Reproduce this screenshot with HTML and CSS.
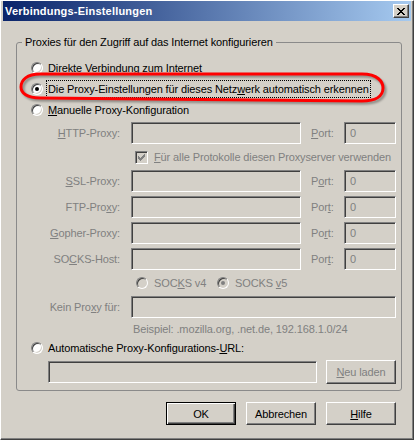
FILE: index.html
```html
<!DOCTYPE html>
<html lang="de">
<head>
<meta charset="utf-8">
<title>Verbindungs-Einstellungen</title>
<link rel="stylesheet" href="styles.css">
</head>
<body>
<div class="window">
  <div class="titlebar">
    <span class="title">Verbindungs-Einstellungen</span>
    <span class="close"><svg width="8" height="7" viewBox="0 0 8 7" shape-rendering="crispEdges"><path fill="#000" d="M0 0h2v1H0zM6 0h2v1H6zM1 1h2v1H1zM5 1h2v1H5zM2 2h4v1H2zM3 3h2v1H3zM2 4h4v1H2zM1 5h2v1H1zM5 5h2v1H5zM0 6h2v1H0zM6 6h2v1H6z"/></svg></span>
  </div>

  <fieldset class="group">
    <legend>Proxies für den Zugriff auf das Internet konfigurieren</legend>

    <div class="radio-row"><span class="radio"></span><span class="lbl"><u>D</u>irekte Verbindung zum Internet</span></div>
    <div class="radio-row"><span class="radio checked"></span><span class="lbl focus">Die Proxy-Einstellungen für dieses Netz<u>w</u>erk automatisch erkennen</span></div>
    <div class="radio-row"><span class="radio"></span><span class="lbl"><u>M</u>anuelle Proxy-Konfiguration</span></div>

    <div class="manual">
      <span class="flabel"><u>H</u>TTP-Proxy:</span><span class="field"></span><span class="plabel"><u>P</u>ort:</span><span class="field">0</span>

      <div class="check-row span-all">
        <span class="check"><svg width="7" height="7" viewBox="0 0 7 7" shape-rendering="crispEdges"><path fill="#808080" d="M6 0h1v1H6zM5 1h2v1H5zM0 2h1v1H0zM4 2h3v1H4zM0 3h2v1H0zM3 3h3v1H3zM0 4h5v1H0zM1 5h3v1H1zM2 6h1v1H2z"/></svg></span>
        <span><u>F</u>ür alle Protokolle diesen Proxyserver verwenden</span>
      </div>

      <span class="flabel"><u>S</u>SL-Proxy:</span><span class="field"></span><span class="plabel">P<u>o</u>rt:</span><span class="field">0</span>
      <span class="flabel">FTP-Pro<u>x</u>y:</span><span class="field"></span><span class="plabel">Por<u>t</u>:</span><span class="field">0</span>
      <span class="flabel"><u>G</u>opher-Proxy:</span><span class="field"></span><span class="plabel">Po<u>r</u>t:</span><span class="field">0</span>
      <span class="flabel">SO<u>C</u>KS-Host:</span><span class="field"></span><span class="plabel">Por<u>t</u>:</span><span class="field">0</span>

      <div class="socks-row span-all">
        <span class="socks-opt"><span class="radio disabled"></span><span>SOC<u>K</u>S v4</span></span>
        <span class="socks-opt"><span class="radio disabled checked"></span><span>SOCKS <u>v</u>5</span></span>
      </div>

      <span class="flabel">Kein Pro<u>x</u>y für:</span><span class="field span-all"></span>
      <div class="example span-all">Beispiel: .mozilla.org, .net.de, 192.168.1.0/24</div>
    </div>

    <div class="radio-row auto"><span class="radio"></span><span class="lbl">Automatische Proxy-Konfigurations-<u>U</u>RL:</span></div>
    <div class="url-row">
      <span class="field url"></span>
      <span class="btn disabled"><span><u>N</u>eu laden</span></span>
    </div>
  </fieldset>

  <div class="buttons">
    <span class="btn default">OK</span>
    <span class="btn">Abbrechen</span>
    <span class="btn"><span><u>H</u>ilfe</span></span>
  </div>

  <svg class="annotation" width="414" height="440" viewBox="0 0 414 440">
    <defs>
      <filter id="sh" x="-10%" y="-50%" width="120%" height="200%">
        <feGaussianBlur stdDeviation="1.2"/>
      </filter>
    </defs>
    <path d="M41 76 L363 76 C379 76 385 84 385 90 C385 98 378 103 364 103 L41 100 C29 100 23 95 23 89 C23 82 29 76 41 76 Z" fill="none" stroke="rgba(0,0,0,0.35)" stroke-width="3" filter="url(#sh)"/>
    <path d="M40 74 L362 74 C378 74 383 82 383 88 C383 96 376 101 362 101 L40 98 C27 98 21 93 21 87 C21 80 27 74 40 74 Z" fill="none" stroke="#ff0000" stroke-width="3"/>
  </svg>
</div>
</body>
</html>
```

FILE: styles.css
```css
html, body {
  margin: 0;
  padding: 0;
  background: #d4d0c8;
}

body {
  font-family: "Liberation Sans", Arial, sans-serif;
  font-size: 11px;
  letter-spacing: -0.12px;
  color: #000;
}

u {
  text-decoration: underline;
  text-underline-offset: 1px;
}

.window {
  position: relative;
  box-sizing: border-box;
  width: 414px;
  height: 440px;
  background: #d4d0c8;
  border-style: solid;
  border-width: 1px;
  border-color: #ffffff #404040 #404040 #ffffff;
  box-shadow: inset -1px -1px #808080;
  padding: 0 2px 2px 2px;
}

/* ---------- title bar ---------- */
.titlebar {
  height: 20px;
  display: flex;
  align-items: center;
  justify-content: space-between;
  padding: 0 2px;
  background: linear-gradient(to right, #0a246a, #a6caf0);
}

.title {
  color: #fff;
  font-weight: bold;
  letter-spacing: 0.2px;
  white-space: nowrap;
}

.close {
  box-sizing: border-box;
  width: 16px;
  height: 14px;
  display: flex;
  align-items: center;
  justify-content: center;
  background: #d4d0c8;
  border: 1px solid;
  border-color: #ffffff #404040 #404040 #ffffff;
  box-shadow: inset -1px -1px #808080;
}

/* ---------- group box ---------- */
.group {
  min-width: 0;
  margin: 14px 9px 0 13px;
  padding: 8px 5px 6px 13px;
  border: 1px solid #8a8a8a;
  border-radius: 3px;
}

.group legend {
  margin-left: -8px;
  padding: 0 3px;
  line-height: 14px;
}

/* ---------- radios ---------- */
.radio-row {
  display: flex;
  align-items: center;
  height: 21px;
}

.radio {
  position: relative;
  flex: none;
  box-sizing: border-box;
  width: 12px;
  height: 12px;
  margin: 0 3px 0 1px;
  border-radius: 50%;
  border: 1px solid;
  border-color: #808080 #ffffff #ffffff #808080;
  background: #fff;
  box-shadow: inset 1px 1px #404040, inset -1px -1px #d4d0c8;
}

.radio.checked::after {
  content: "";
  position: absolute;
  left: 3px;
  top: 3px;
  width: 4px;
  height: 4px;
  border-radius: 50%;
  background: #000;
}

.radio.disabled {
  background: #d4d0c8;
}

.radio.disabled.checked::after {
  background: #808080;
}

.lbl {
  border: 1px dotted transparent;
  padding: 0 1px;
  line-height: 16px;
  white-space: nowrap;
}

.lbl.focus {
  border-color: #000;
}

/* ---------- manual proxy grid ---------- */
.manual {
  display: grid;
  grid-template-columns: 101px 170px 43px 52px;
  row-gap: 4px;
  margin-top: 2px;
  color: #808080;
}

.span-all {
  grid-column: 2 / -1;
}

.flabel {
  grid-column: 1;
  align-self: center;
  text-align: right;
  padding-right: 11px;
  white-space: nowrap;
}

.plabel {
  align-self: center;
  padding-left: 10px;
}

.field {
  box-sizing: border-box;
  height: 22px;
  padding-left: 5px;
  line-height: 20px;
  color: #808080;
  background: #d4d0c8;
  border: 1px solid;
  border-color: #808080 #ffffff #ffffff #808080;
  box-shadow: inset 1px 1px #404040, inset -1px -1px #d4d0c8;
}

.check-row {
  display: flex;
  align-items: center;
  height: 18px;
  padding-left: 4px;
  white-space: nowrap;
}

.check {
  flex: none;
  box-sizing: border-box;
  width: 13px;
  height: 13px;
  margin-right: 6px;
  display: flex;
  align-items: center;
  justify-content: center;
  border: 1px solid;
  border-color: #808080 #ffffff #ffffff #808080;
  box-shadow: inset 1px 1px #404040, inset -1px -1px #d4d0c8;
}

.socks-row {
  display: flex;
  align-items: center;
  height: 18px;
  padding-left: 5px;
}

.socks-opt {
  display: flex;
  align-items: center;
  white-space: nowrap;
}

.socks-opt:first-child {
  width: 81px;
}

.socks-opt .radio {
  margin: 0 6px 0 0;
}

.example {
  height: 14px;
  line-height: 14px;
  padding-left: 2px;
  white-space: nowrap;
}

/* ---------- auto URL ---------- */
.radio-row.auto {
  margin-top: 1px;
}

.url-row {
  display: flex;
  align-items: center;
  gap: 9px;
  height: 24px;
  margin: 2px 0 0 18px;
}

.field.url {
  width: 269px;
}

/* ---------- buttons ---------- */
.btn {
  box-sizing: border-box;
  width: 70px;
  height: 23px;
  display: flex;
  align-items: center;
  justify-content: center;
  background: #d4d0c8;
  border: 1px solid;
  border-color: #ffffff #404040 #404040 #ffffff;
  box-shadow: inset -1px -1px #808080;
  white-space: nowrap;
}

.btn.default {
  border-color: #000;
  box-shadow: inset 1px 1px #ffffff, inset -1px -1px #404040, inset -2px -2px #808080;
}

.btn.disabled {
  height: 24px;
  color: #808080;
}

.buttons {
  display: flex;
  justify-content: flex-end;
  gap: 10px;
  margin: 11px 15px 0 0;
}

/* ---------- annotation overlay ---------- */
.annotation {
  position: absolute;
  left: -1px;
  top: -1px;
  pointer-events: none;
}
```
